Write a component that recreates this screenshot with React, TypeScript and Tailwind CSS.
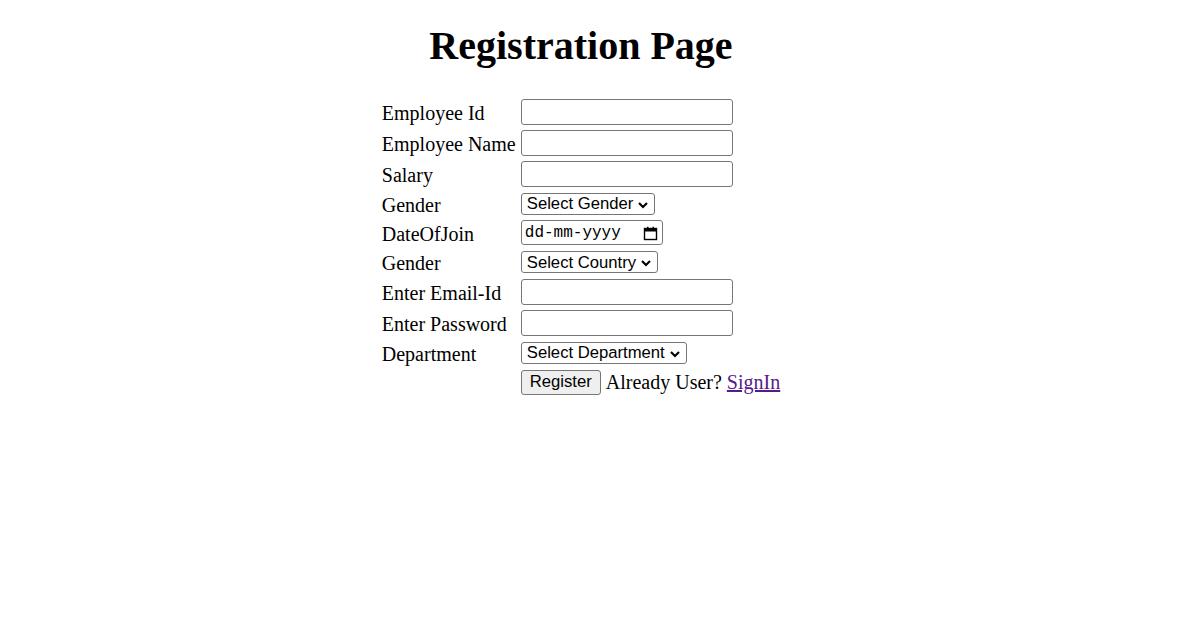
import React from "react";

const serif = { fontFamily: '"Liberation Serif", "Times New Roman", serif' };

function Chevron() {
  return (
    <svg width="10" height="8" viewBox="0 0 10 8" className="shrink-0">
      <path d="M1 2 L5 6 L9 2" fill="none" stroke="#000" strokeWidth="2.1" />
    </svg>
  );
}

function FakeSelect({ label }: { label: string }) {
  return (
    <div className="flex h-[22px] items-center rounded-[3px] border border-[#767676] bg-white pl-[5px] pr-[6px] pt-[2px] font-['Liberation_Sans',Arial,sans-serif] text-[16.67px] leading-none text-black">
      <span className="whitespace-nowrap">{label}</span>
      <span className="ml-[5px] flex w-[10px] items-center justify-center">
        <Chevron />
      </span>
    </div>
  );
}

function TextBox({ type = "text" }: { type?: string }) {
  return (
    <input
      type={type}
      className="h-[26px] w-[212px] rounded-[3px] border border-[#767676] bg-white px-[2px] font-['Liberation_Sans',Arial,sans-serif] text-[16.67px] outline-none"
    />
  );
}

function Row({ label, h, children }: { label: string; h: string; children: React.ReactNode }) {
  return (
    <div className={`flex items-center ${h}`}>
      <div className="w-[134px] shrink-0 whitespace-nowrap pt-[3px] text-[20px] leading-[23px]" style={serif}>
        {label}
      </div>
      <div className="ml-[5px] flex items-center">{children}</div>
    </div>
  );
}

export default function App() {
  return (
    <div className="min-h-[632px] w-[1162px] bg-white text-black" style={serif}>
      <h1 className="mt-[23px] text-center text-[40px] font-bold leading-[46px]">Registration Page</h1>
      <form className="mx-auto mt-[27px] w-fit" onSubmit={(e) => e.preventDefault()}>
        <Row label="Employee Id" h="h-[31px]">
          <TextBox />
        </Row>
        <Row label="Employee Name" h="h-[31px]">
          <TextBox />
        </Row>
        <Row label="Salary" h="h-[31px]">
          <TextBox />
        </Row>
        <Row label="Gender" h="h-[29px]">
          <FakeSelect label="Select Gender" />
        </Row>
        <Row label="DateOfJoin" h="h-[29px]">
          <div className="flex h-[25px] w-[142px] items-center rounded-[3px] border border-[#767676] bg-white pl-[3px] pr-[4px] pt-[1px]">
            <span className="whitespace-nowrap font-['Liberation_Mono','Courier_New',monospace] text-[16px] leading-none">
              dd-mm-yyyy
            </span>
            <svg width="15" height="15" viewBox="0 0 15 15" className="ml-auto">
              <rect x="1.5" y="2.5" width="12" height="11" fill="none" stroke="#000" strokeWidth="1.4" />
              <rect x="1.5" y="2.5" width="12" height="3" fill="#000" />
              <rect x="4" y="0.8" width="1.5" height="3" fill="#000" />
              <rect x="9.5" y="0.8" width="1.5" height="3" fill="#000" />
            </svg>
          </div>
        </Row>
        <Row label="Gender" h="h-[30px]">
          <FakeSelect label="Select Country" />
        </Row>
        <Row label="Enter Email-Id" h="h-[30px]">
          <TextBox type="email" />
        </Row>
        <Row label="Enter Password" h="h-[31px]">
          <TextBox type="password" />
        </Row>
        <Row label="Department" h="h-[29px]">
          <FakeSelect label="Select Department" />
        </Row>
        <Row label="" h="h-[30px]">
          <button
            type="submit"
            className="h-[25px] w-[80px] rounded-[3px] border border-[#767676] bg-[#efefef] pt-[1px] font-['Liberation_Sans',Arial,sans-serif] text-[16.67px] leading-none text-black"
          >
            Register
          </button>
          <span className="ml-[5px] whitespace-nowrap text-[20px] leading-[23px]" style={serif}>
            Already User?{" "}
            <a href="#" className="text-[#551a8b] underline">
              SignIn
            </a>
          </span>
        </Row>
      </form>
    </div>
  );
}
